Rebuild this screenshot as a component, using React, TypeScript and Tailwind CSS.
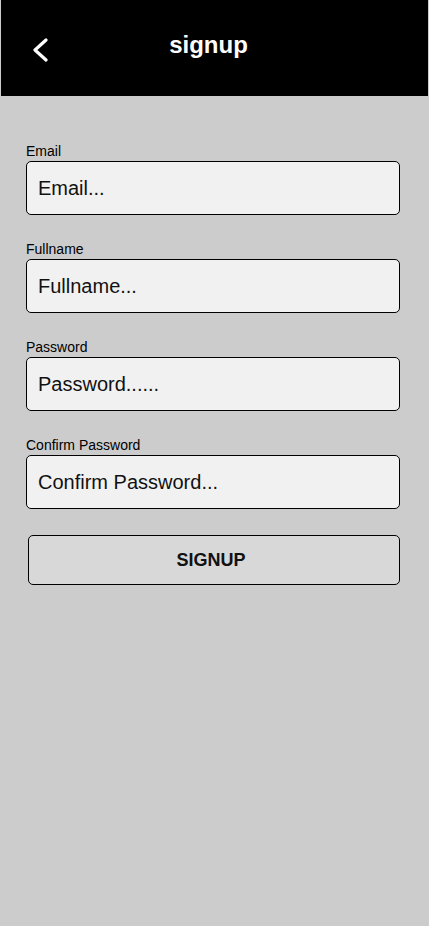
const fields = [
  { label: "Email", placeholder: "Email..." },
  { label: "Fullname", placeholder: "Fullname..." },
  { label: "Password", placeholder: "Password......" },
  { label: "Confirm Password", placeholder: "Confirm Password..." },
];

function Field({ label, placeholder }: { label: string; placeholder: string }) {
  return (
    <div className="flex flex-col">
      <label className="text-[14px] leading-[16px] text-black">{label}</label>
      <div className="mt-[2px] h-[54px] w-[374px] rounded-[5px] border border-black bg-[#f1f1f1] flex items-center pl-[11px] text-[20px] text-[#111]">
        {placeholder}
      </div>
    </div>
  );
}

export default function App() {
  return (
    <div
      className="min-h-[926px] w-[429px] bg-[#cccccc]"
      style={{ fontFamily: '"Liberation Sans", Arial, sans-serif' }}
    >
      <header className="h-[96px] bg-black ml-[1px] mr-[1px] flex items-center relative">
        <button className="ml-[31px] mt-[4px] text-white">
          <svg width="17" height="24" viewBox="0 0 17 24" fill="none">
            <path d="M14 2 L3 12 L14 22" stroke="white" strokeWidth="3.2" strokeLinecap="round" strokeLinejoin="round" />
          </svg>
        </button>
        <h1 className="absolute left-0 right-0 top-[30px] text-center text-white font-bold text-[24px] leading-[30px] -translate-x-[6px]">
          signup
        </h1>
      </header>
      <main className="pl-[26px] pt-[47px] flex flex-col gap-[26px]">
        {fields.map((f) => (
          <Field key={f.label} {...f} />
        ))}
        <button className="ml-[2px] h-[50px] w-[372px] rounded-[5px] border border-black bg-[#d8d8d8] text-[18px] font-bold text-[#111] pr-[6px]">
          SIGNUP
        </button>
      </main>
    </div>
  );
}
